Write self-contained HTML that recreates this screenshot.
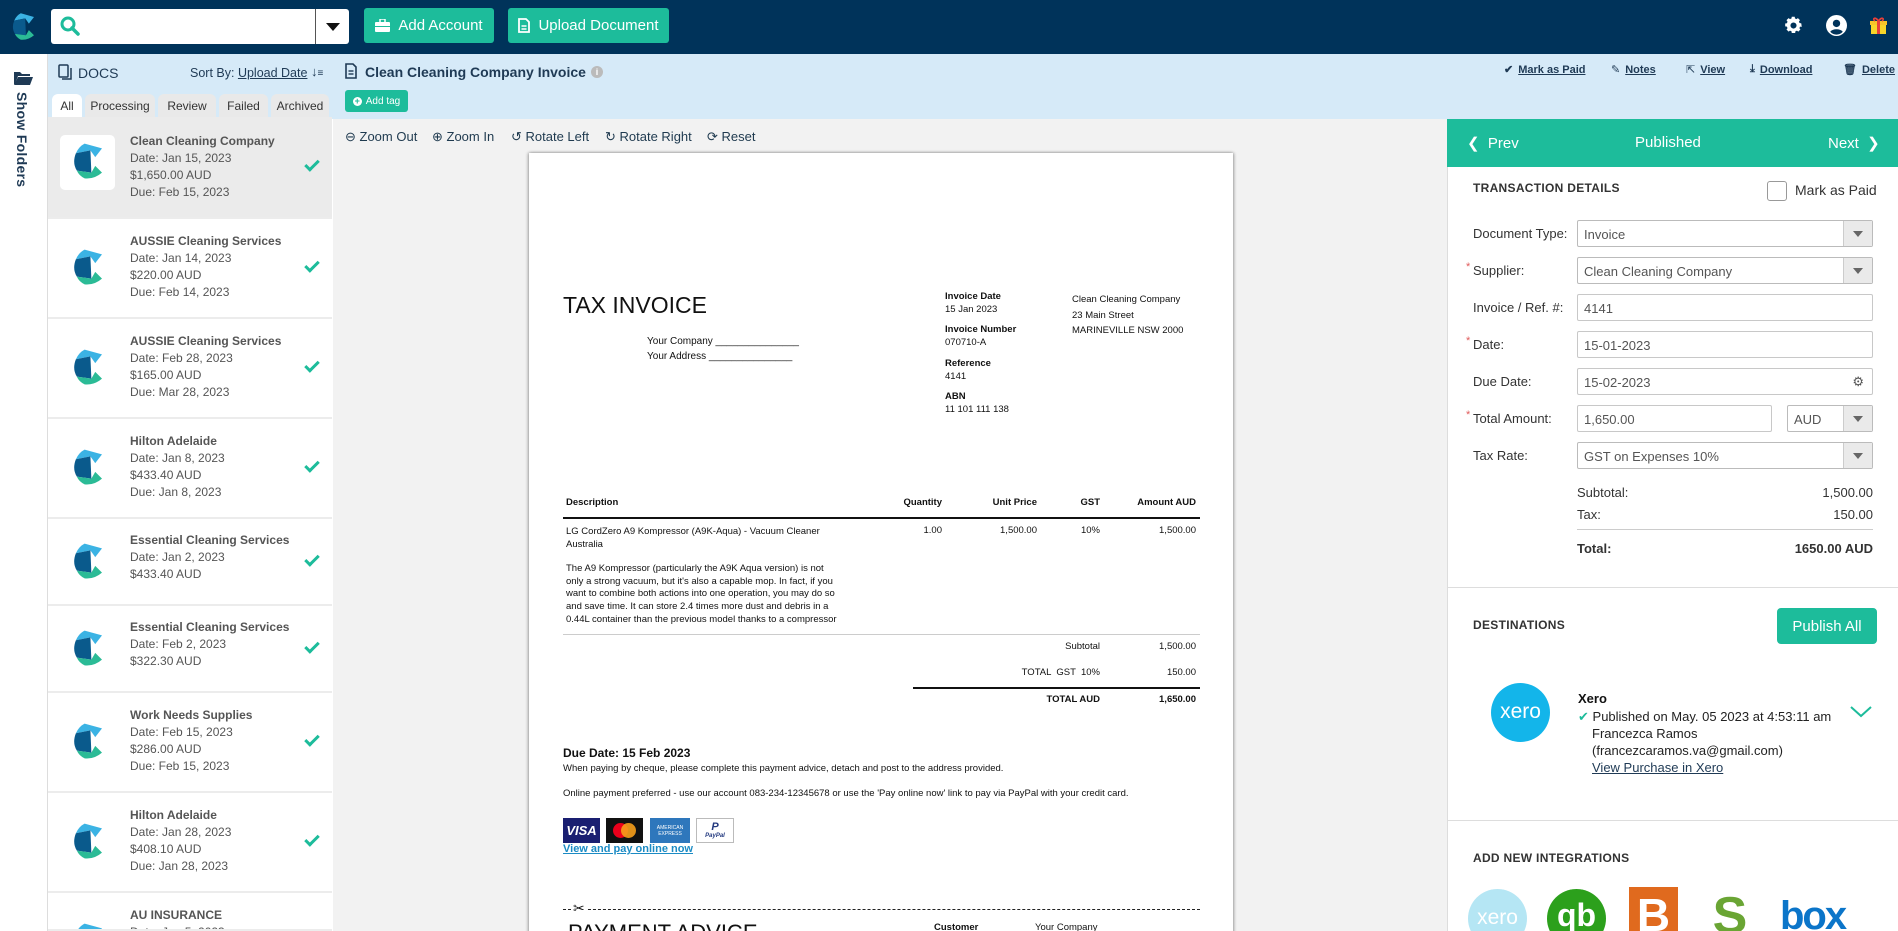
<!DOCTYPE html>
<html style="overflow:hidden;width:1898px;height:931px"><head><meta charset="utf-8">
<style>
*{box-sizing:border-box;margin:0;padding:0}
html,body{overflow:hidden}
body{width:1898px;height:931px;font-family:"Liberation Sans",Arial,sans-serif;background:#fff;color:#333}
#root{position:relative;width:1898px;height:931px;overflow:hidden}
.a{position:absolute}
.nav{left:0;top:0;width:1898px;height:54px;background:#00335a}
.btn{background:#1dbc9b;color:#fff;border-radius:3px;font-size:15px;display:flex;align-items:center;justify-content:center;gap:8px}
.lbl{font-size:13px;color:#333;white-space:nowrap}
.inp{border:1px solid #c8c8c8;background:#fff;height:27px;font-size:13px;color:#555;padding:6px 6px;border-radius:2px}
.sel{border:1px solid #bbb}
.sel .dd{position:absolute;right:0;top:0;width:29px;height:25px;background:#eaeaea;border-left:1px solid #ccc}
.sel .dd:after{content:"";position:absolute;left:9px;top:10px;border:5px solid transparent;border-top:6px solid #666}
.req:before{content:"*";color:#e05a5a;position:absolute;left:-7px;top:-2px;font-size:11px}
.item{left:48px;width:284px;border-bottom:2px solid #ececec;background:#fff}
.item .t{position:absolute;left:82px;font-size:12px;color:#555;line-height:17px;top:22px;white-space:nowrap}
.item .t b{color:#555}
.chk{position:absolute;left:257px;width:14px;height:8px;border-left:3px solid #1dbc9b;border-bottom:3px solid #1dbc9b;transform:rotate(-45deg)}
.inv{font-family:"Liberation Sans",Arial,sans-serif;color:#111;white-space:nowrap}
.tab{position:absolute;top:94px;height:23px;background:#e9e9e9;border-radius:6px 6px 0 0;font-size:12px;color:#333;text-align:center;line-height:24px}
.tool{font-size:13px;color:#1f3a4f;top:129px;display:flex;align-items:center;gap:5px;white-space:nowrap}
.act{font-size:11px;color:#1f3a55;font-weight:bold;top:63px;display:flex;gap:5px;align-items:center;white-space:nowrap}
.act u{text-decoration:underline}
</style></head><body><div id="root">

<div class="a nav"></div>
<svg class="a" style="left:12px;top:11px" width="22" height="31" viewBox="0 0 30 36"><path d="M12,0 L30,5 L23,14 L18,7 L3,10 Q6,3 12,0Z" fill="#3bb3e4"/><path d="M18,7 L3,10 Q-1,20 4,28 L19,30Z" fill="#0a5a8c"/><path d="M4,28 L19,30 L23,23 L30,30 Q22,37 12,36 Q6,33 4,28Z" fill="#2bbb96"/></svg>
<div class="a" style="left:51px;top:9px;width:298px;height:35px;background:#fff;border-radius:3px"></div>
<div class="a" style="left:315px;top:9px;width:1px;height:35px;background:#555"></div>
<div class="a" style="left:326px;top:23px;border:7px solid transparent;border-top:8px solid #111"></div>
<svg class="a" style="left:60px;top:16px" width="20" height="20"><circle cx="8" cy="8" r="6" stroke="#1dbc9b" stroke-width="3" fill="none"/><line x1="12" y1="12" x2="18" y2="18" stroke="#1dbc9b" stroke-width="3.5" stroke-linecap="round"/></svg>
<div class="a btn" style="left:364px;top:8px;width:130px;height:35px"><svg width="15" height="13"><rect x="0" y="3" width="15" height="10" rx="1" fill="#fff"/><rect x="5" y="0" width="5" height="4" fill="none" stroke="#fff" stroke-width="1.5"/><rect x="0" y="7" width="15" height="1" fill="#1dbc9b"/></svg>Add Account</div>
<div class="a btn" style="left:508px;top:8px;width:161px;height:35px"><svg width="12" height="15"><path d="M1 1h7l3 3v10H1z" fill="none" stroke="#fff" stroke-width="1.8"/><line x1="3.5" y1="8" x2="8.5" y2="8" stroke="#fff" stroke-width="1.5"/><line x1="3.5" y1="11" x2="8.5" y2="11" stroke="#fff" stroke-width="1.5"/></svg>Upload Document</div>
<svg class="a" style="left:1783px;top:15px" width="21" height="21" viewBox="0 0 24 24"><path fill="#fff" d="M12 8.5a3.5 3.5 0 1 0 0 7 3.5 3.5 0 0 0 0-7zm9.4 5.1l-2-.3a7 7 0 0 1-.7 1.7l1.2 1.6-2.4 2.4-1.6-1.2a7 7 0 0 1-1.7.7l-.3 2H10l-.3-2a7 7 0 0 1-1.7-.7l-1.6 1.2-2.4-2.4 1.2-1.600a7 7 0 0 1-.7-1.7l-2-.3v-3.3l2-.3a7 7 0 0 1 .7-1.7L4 5.9 6.4 3.5 8 4.7a7 7 0 0 1 1.7-.7l.3-2h3.4l.3 2a7 7 0 0 1 1.7.7l1.6-1.2 2.4 2.4-1.2 1.6a7 7 0 0 1 .7 1.7l2 .3z"/></svg>
<svg class="a" style="left:1826px;top:15px" width="21" height="21" viewBox="0 0 20 20"><circle cx="10" cy="10" r="10" fill="#fff"/><circle cx="10" cy="8" r="3.5" fill="#00335a"/><path d="M4 16a7 5 0 0 1 12 0a8 8 0 0 1-12 0z" fill="#00335a"/></svg>
<svg class="a" style="left:1869px;top:16px" width="19" height="18"><rect x="1" y="5" width="17" height="4" fill="#f7c52a"/><rect x="2" y="9" width="15" height="9" fill="#f7d62a"/><rect x="8" y="5" width="3" height="13" fill="#e8403a"/><path d="M9.5 5C6 0 3 3 6 5M9.5 5C13 0 16 3 13 5" stroke="#e8403a" stroke-width="1.6" fill="none"/></svg>

<div class="a" style="left:0;top:54px;width:48px;height:877px;background:#fff;border-right:1px solid #ddd"></div>
<svg class="a" style="left:14px;top:70px" width="19" height="15"><path d="M0 2h6l2 2h8v2H4L1 14H0z" fill="#1f3a55"/><path d="M4 7h15l-3 8H0z" fill="#1f3a55"/></svg>
<div class="a" style="left:14px;top:92px;writing-mode:vertical-rl;font-size:14px;font-weight:bold;color:#1f3a55;letter-spacing:.3px">Show Folders</div>

<div class="a" style="left:48px;top:54px;width:284px;height:63px;background:#d6eaf8"></div>
<svg class="a" style="left:58px;top:64px" width="14" height="17"><rect x="1" y="1" width="9" height="12" rx="1" fill="none" stroke="#1f3a55" stroke-width="1.5"/><path d="M4 15h9V4" fill="none" stroke="#1f3a55" stroke-width="1.5"/></svg>
<div class="a" style="left:78px;top:65px;font-size:14px;color:#1f3a55">DOCS</div>
<div class="a" style="left:190px;top:66px;font-size:12.5px;color:#1f3a55;white-space:nowrap">Sort By: <u>Upload Date</u></div>
<div class="a" style="left:311px;top:64px;font-size:13px;color:#1f3a55;font-weight:bold">↓<span style="font-size:10px">≡</span></div>
<div class="tab" style="left:52px;width:30px;background:#fff">All</div>
<div class="tab" style="left:85px;width:70px">Processing</div>
<div class="tab" style="left:158px;width:58px">Review</div>
<div class="tab" style="left:219px;width:49px">Failed</div>
<div class="tab" style="left:271px;width:58px">Archived</div>

<div class="a" style="left:48px;top:117px;width:284px;height:814px;background:#fff;border-right:1px solid #ddd"></div>

<div class="a item" style="top:117px;height:102px;background:#ebebeb">
 <div class="a" style="left:12px;top:18px;width:55px;height:55px;background:#fff;border-radius:5px"></div>
 <svg class="a" style="left:25px;top:26px" width="29" height="36" viewBox="0 0 30 36"><path d="M12,0 L30,5 L23,14 L18,7 L3,10 Q6,3 12,0Z" fill="#3bb3e4"/><path d="M18,7 L3,10 Q-1,20 4,28 L19,30Z" fill="#0a5a8c"/><path d="M4,28 L19,30 L23,23 L30,30 Q22,37 12,36 Q6,33 4,28Z" fill="#2bbb96"/></svg>
 <div class="t" style="top:16px"><b>Clean Cleaning Company</b><br>Date: Jan 15, 2023<br>$1,650.00 AUD<br>Due: Feb 15, 2023</div>
 <div class="chk" style="top:43px"></div>
</div>
<div id="list"></div>

<div class="a" style="left:332px;top:54px;width:1566px;height:65px;background:#d6eaf8"></div>
<svg class="a" style="left:345px;top:63px" width="12" height="16"><path d="M1 1h7l3 3v11H1z" fill="none" stroke="#1f3a55" stroke-width="1.6"/><line x1="3.5" y1="8" x2="8.5" y2="8" stroke="#1f3a55" stroke-width="1.4"/><line x1="3.5" y1="11" x2="8.5" y2="11" stroke="#1f3a55" stroke-width="1.4"/></svg>
<div class="a" style="left:365px;top:64px;font-size:14px;font-weight:bold;color:#1f3a55;white-space:nowrap">Clean Cleaning Company Invoice</div>
<div class="a" style="left:591px;top:66px;width:12px;height:12px;border-radius:50%;background:#bbb;color:#fff;font-size:9px;text-align:center;line-height:12px;font-weight:bold">i</div>
<div class="a btn" style="left:345px;top:90px;width:63px;height:22px;font-size:10px;gap:4px;border-radius:3px"><span style="display:inline-block;width:9px;height:9px;border-radius:50%;background:#fff;color:#1dbc9b;font-size:9px;line-height:9px;text-align:center;font-weight:bold">+</span>Add tag</div>

<div class="a act" style="left:1504px">✔ <u>Mark as Paid</u></div>
<div class="a act" style="left:1611px"><span style="font-weight:normal">✎</span> <u>Notes</u></div>
<div class="a act" style="left:1686px"><span style="font-weight:normal">⇱</span> <u>View</u></div>
<div class="a act" style="left:1750px">⤓ <u>Download</u></div>
<div class="a act" style="left:1843px">🗑︎ <u>Delete</u></div>

<div class="a" style="left:333px;top:119px;width:1114px;height:812px;background:#f2f2f2"></div>
<div class="a tool" style="left:345px">⊖ Zoom Out</div>
<div class="a tool" style="left:432px">⊕ Zoom In</div>
<div class="a tool" style="left:511px">↺ Rotate Left</div>
<div class="a tool" style="left:605px">↻ Rotate Right</div>
<div class="a tool" style="left:707px">⟳ Reset</div>

<div class="a" style="left:529px;top:153px;width:704px;height:790px;background:#fff;box-shadow:-1px 0 3px rgba(0,0,0,.3),1px 0 3px rgba(0,0,0,.3)"></div>
<div class="a inv" style="left:563px;top:292px;font-size:23px">TAX INVOICE</div>
<div class="a inv" style="left:647px;top:334px;font-size:10px;line-height:15px">Your Company _______________<br>Your Address _______________</div>
<div class="a inv" style="left:945px;top:291px;font-size:9.5px;line-height:12.7px"><b>Invoice Date</b><br>15 Jan 2023<br><div style="height:8px"></div><b>Invoice Number</b><br>070710-A<br><div style="height:8px"></div><b>Reference</b><br>4141<br><div style="height:8px"></div><b>ABN</b><br>11 101 111 138</div>
<div class="a inv" style="left:1072px;top:292px;font-size:9.5px;line-height:15.5px">Clean Cleaning Company<br>23 Main Street<br>MARINEVILLE NSW 2000</div>

<div class="a inv" style="left:566px;top:497px;font-size:9.5px;font-weight:bold">Description</div>
<div class="a inv" style="left:862px;width:80px;text-align:right;top:497px;font-size:9.5px;font-weight:bold">Quantity</div>
<div class="a inv" style="left:957px;width:80px;text-align:right;top:497px;font-size:9.5px;font-weight:bold">Unit Price</div>
<div class="a inv" style="left:1040px;width:60px;text-align:right;top:497px;font-size:9.5px;font-weight:bold">GST</div>
<div class="a inv" style="left:1100px;width:96px;text-align:right;top:497px;font-size:9.5px;font-weight:bold">Amount AUD</div>
<div class="a" style="left:563px;top:517px;width:637px;height:1.5px;background:#111"></div>
<div class="a inv" style="left:566px;top:525px;font-size:9.5px;line-height:13px">LG CordZero A9 Kompressor (A9K-Aqua) - Vacuum Cleaner<br>Australia</div>
<div class="a inv" style="left:862px;width:80px;text-align:right;top:525px;font-size:9.5px">1.00</div>
<div class="a inv" style="left:957px;width:80px;text-align:right;top:525px;font-size:9.5px">1,500.00</div>
<div class="a inv" style="left:1040px;width:60px;text-align:right;top:525px;font-size:9.5px">10%</div>
<div class="a inv" style="left:1100px;width:96px;text-align:right;top:525px;font-size:9.5px">1,500.00</div>
<div class="a inv" style="left:566px;top:563px;font-size:9.5px;line-height:12.7px">The A9 Kompressor (particularly the A9K Aqua version) is not<br>only a strong vacuum, but it's also a capable mop. In fact, if you<br>want to combine both actions into one operation, you may do so<br>and save time. It can store 2.4 times more dust and debris in a<br>0.44L container than the previous model thanks to a compressor</div>
<div class="a" style="left:563px;top:634px;width:637px;height:1px;background:#ccc"></div>
<div class="a inv" style="left:1000px;width:100px;text-align:right;top:641px;font-size:9.5px">Subtotal</div>
<div class="a inv" style="left:1100px;width:96px;text-align:right;top:641px;font-size:9.5px">1,500.00</div>
<div class="a inv" style="left:1000px;width:100px;text-align:right;top:667px;font-size:9.5px">TOTAL &nbsp;GST &nbsp;10%</div>
<div class="a inv" style="left:1100px;width:96px;text-align:right;top:667px;font-size:9.5px">150.00</div>
<div class="a" style="left:913px;top:687px;width:287px;height:1.5px;background:#111"></div>
<div class="a inv" style="left:1000px;width:100px;text-align:right;top:694px;font-size:9.5px;font-weight:bold">TOTAL AUD</div>
<div class="a inv" style="left:1100px;width:96px;text-align:right;top:694px;font-size:9.5px;font-weight:bold">1,650.00</div>
<div class="a inv" style="left:563px;top:746px;font-size:12px;font-weight:bold">Due Date: 15 Feb 2023</div>
<div class="a inv" style="left:563px;top:763px;font-size:9.5px">When paying by cheque, please complete this payment advice, detach and post to the address provided.</div>
<div class="a inv" style="left:563px;top:788px;font-size:9.5px">Online payment preferred - use our account 083-234-12345678 or use the 'Pay online now' link to pay via PayPal with your credit card.</div>
<div class="a" style="left:563px;top:818px;width:37px;height:25px;background:#1a1f71;color:#fff;font-weight:bold;font-style:italic;font-size:13px;text-align:center;line-height:25px">VISA</div>
<div class="a" style="left:606px;top:818px;width:37px;height:25px;background:#111"><div class="a" style="left:7px;top:5px;width:15px;height:15px;border-radius:50%;background:#eb001b"></div><div class="a" style="left:15px;top:5px;width:15px;height:15px;border-radius:50%;background:#f79e1b;opacity:.9"></div></div>
<div class="a" style="left:650px;top:818px;width:40px;height:25px;background:#2e77bc;color:#fff;font-size:5px;text-align:center;padding-top:7px">AMERICAN<br>EXPRESS</div>
<div class="a" style="left:696px;top:818px;width:38px;height:25px;border:1px solid #bbb;color:#253b80;font-size:6px;font-style:italic;font-weight:bold;text-align:center;padding-top:2px"><span style="font-size:11px">P</span><br>PayPal</div>
<div class="a inv" style="left:563px;top:843px;font-size:11px;color:#1b8bc4;text-decoration:underline;font-weight:bold">View and pay online now</div>
<div class="a" style="left:563px;top:909px;width:637px;border-top:1.5px dashed #222"></div>
<div class="a inv" style="left:571px;top:900px;font-size:14px;background:#fff;padding:0 2px">✂</div>
<div class="a inv" style="left:568px;top:920px;font-size:22px">PAYMENT ADVICE</div>
<div class="a inv" style="left:934px;top:922px;font-size:9.5px;font-weight:bold">Customer</div>
<div class="a inv" style="left:1035px;top:922px;font-size:9.5px">Your Company</div>

<div class="a" style="left:1447px;top:119px;width:451px;height:812px;background:#fff;border-left:1px solid #ddd"></div>
<div class="a" style="left:1447px;top:119px;width:451px;height:48px;background:#1dbc9b"></div>
<div class="a" style="left:1467px;top:134px;color:#fff;font-size:15px">❮ &nbsp;Prev</div>
<div class="a" style="left:1635px;top:134px;color:#fff;font-size:15px">Published</div>
<div class="a" style="left:1828px;top:134px;color:#fff;font-size:15px">Next &nbsp;❯</div>

<div class="a" style="left:1473px;top:181px;font-size:12px;font-weight:bold;color:#333;letter-spacing:.3px">TRANSACTION DETAILS</div>
<div class="a" style="left:1767px;top:181px;width:20px;height:20px;border:1px solid #999;border-radius:3px"></div>
<div class="a" style="left:1795px;top:182px;font-size:14px;color:#333">Mark as Paid</div>

<div class="a lbl" style="left:1473px;top:226px">Document Type:</div>
<div class="a inp sel" style="left:1577px;top:220px;width:296px">Invoice<div class="dd"></div></div>
<div class="a lbl req" style="left:1473px;top:263px">Supplier:</div>
<div class="a inp sel" style="left:1577px;top:257px;width:296px">Clean Cleaning Company<div class="dd"></div></div>
<div class="a lbl" style="left:1473px;top:300px">Invoice / Ref. #:</div>
<div class="a inp" style="left:1577px;top:294px;width:296px">4141</div>
<div class="a lbl req" style="left:1473px;top:337px">Date:</div>
<div class="a inp" style="left:1577px;top:331px;width:296px">15-01-2023</div>
<div class="a lbl" style="left:1473px;top:374px">Due Date:</div>
<div class="a inp" style="left:1577px;top:368px;width:296px">15-02-2023<span style="position:absolute;right:8px;top:5px;color:#555">⚙</span></div>
<div class="a lbl req" style="left:1473px;top:411px">Total Amount:</div>
<div class="a inp" style="left:1577px;top:405px;width:195px">1,650.00</div>
<div class="a inp sel" style="left:1787px;top:405px;width:86px">AUD<div class="dd"></div></div>
<div class="a lbl" style="left:1473px;top:448px">Tax Rate:</div>
<div class="a inp sel" style="left:1577px;top:442px;width:296px">GST on Expenses 10%<div class="dd"></div></div>

<div class="a lbl" style="left:1577px;top:485px">Subtotal:</div>
<div class="a lbl" style="left:1773px;width:100px;text-align:right;top:485px">1,500.00</div>
<div class="a lbl" style="left:1577px;top:507px">Tax:</div>
<div class="a lbl" style="left:1773px;width:100px;text-align:right;top:507px">150.00</div>
<div class="a" style="left:1577px;top:529px;width:296px;height:1px;background:#ccc"></div>
<div class="a lbl" style="left:1577px;top:541px;font-weight:bold">Total:</div>
<div class="a lbl" style="left:1753px;width:120px;text-align:right;top:541px;font-weight:bold">1650.00 AUD</div>

<div class="a" style="left:1447px;top:587px;width:451px;height:1px;background:#ddd"></div>
<div class="a" style="left:1473px;top:618px;font-size:12px;font-weight:bold;color:#333;letter-spacing:.3px">DESTINATIONS</div>
<div class="a btn" style="left:1777px;top:608px;width:100px;height:36px;font-size:15px;border-radius:4px">Publish All</div>
<div class="a" style="left:1491px;top:683px;width:59px;height:59px;border-radius:50%;background:#13b5ea;color:#fff;font-size:21px;text-align:center;line-height:57px">xero</div>
<div class="a" style="left:1578px;top:691px;font-size:13px;font-weight:bold;color:#111">Xero</div>
<div class="a" style="left:1578px;top:708px;font-size:13px;color:#222;line-height:17px;white-space:nowrap"><span style="color:#1dbc9b">✔</span> Published on May. 05 2023 at 4:53:11 am<br><span style="padding-left:14px">Francezca Ramos</span><br><span style="padding-left:14px">(francezcaramos.va@gmail.com)</span><br><span style="padding-left:14px;color:#1f3a55;text-decoration:underline">View Purchase in Xero</span></div>
<svg class="a" style="left:1850px;top:705px" width="22" height="14"><path d="M1 2l10 9 10-9" stroke="#1dbc9b" stroke-width="2" fill="none"/></svg>

<div class="a" style="left:1447px;top:820px;width:451px;height:1px;background:#ddd"></div>
<div class="a" style="left:1473px;top:851px;font-size:12px;font-weight:bold;color:#333;letter-spacing:.3px">ADD NEW INTEGRATIONS</div>
<div class="a" style="left:1468px;top:889px;width:59px;height:59px;border-radius:50%;background:#b5e6f4;color:#fff;font-size:21px;text-align:center;line-height:57px">xero</div>
<div class="a" style="left:1547px;top:889px;width:59px;height:59px;border-radius:50%;background:#2ca01c;color:#fff;font-size:32px;font-weight:bold;text-align:center;line-height:52px">qb</div>
<div class="a" style="left:1629px;top:887px;width:49px;height:60px;background:#e06a1e;color:#fff;font-size:46px;font-weight:bold;text-align:center;line-height:56px">B</div>
<div class="a" style="left:1708px;top:890px;width:44px;height:50px;color:#6aa534;font-size:52px;font-weight:bold;line-height:52px;text-align:center">S</div>
<div class="a" style="left:1780px;top:896px;color:#0b75c9;font-size:40px;font-weight:bold;line-height:40px;letter-spacing:-2px">box</div>

<script>
var items=[
["AUSSIE Cleaning Services","Date: Jan 14, 2023","$220.00 AUD","Due: Feb 14, 2023",219,100],
["AUSSIE Cleaning Services","Date: Feb 28, 2023","$165.00 AUD","Due: Mar 28, 2023",319,100],
["Hilton Adelaide","Date: Jan 8, 2023","$433.40 AUD","Due: Jan 8, 2023",419,100],
["Essential Cleaning Services","Date: Jan 2, 2023","$433.40 AUD","",519,87],
["Essential Cleaning Services","Date: Feb 2, 2023","$322.30 AUD","",606,87],
["Work Needs Supplies","Date: Feb 15, 2023","$286.00 AUD","Due: Feb 15, 2023",693,100],
["Hilton Adelaide","Date: Jan 28, 2023","$408.10 AUD","Due: Jan 28, 2023",793,100],
["AU INSURANCE","Date: Jan 5, 2023","","",893,38]];
var logo='<svg class="a" style="left:25px;top:TOPpx" width="29" height="36" viewBox="0 0 30 36"><path d="M12,0 L30,5 L23,14 L18,7 L3,10 Q6,3 12,0Z" fill="#3bb3e4"/><path d="M18,7 L3,10 Q-1,20 4,28 L19,30Z" fill="#0a5a8c"/><path d="M4,28 L19,30 L23,23 L30,30 Q22,37 12,36 Q6,33 4,28Z" fill="#2bbb96"/></svg>';
var h='';
items.forEach(function(it){
 var mid=it[4]>890?50:it[5]/2;
 h+='<div class="a item" style="overflow:hidden;top:'+it[4]+'px;height:'+it[5]+'px">'+logo.replace('TOP',mid-20)+'<div class="t" style="top:'+(it[5]==87?13:14)+'px"><b>'+it[0]+'</b><br>'+it[1]+'<br>'+it[2]+(it[3]?'<br>'+it[3]:'')+'</div>'+(it[4]<890?'<div class="chk" style="top:'+(mid-8)+'px"></div>':'')+'</div>';
});
document.getElementById('list').innerHTML=h;
</script>
</div></body></html>
